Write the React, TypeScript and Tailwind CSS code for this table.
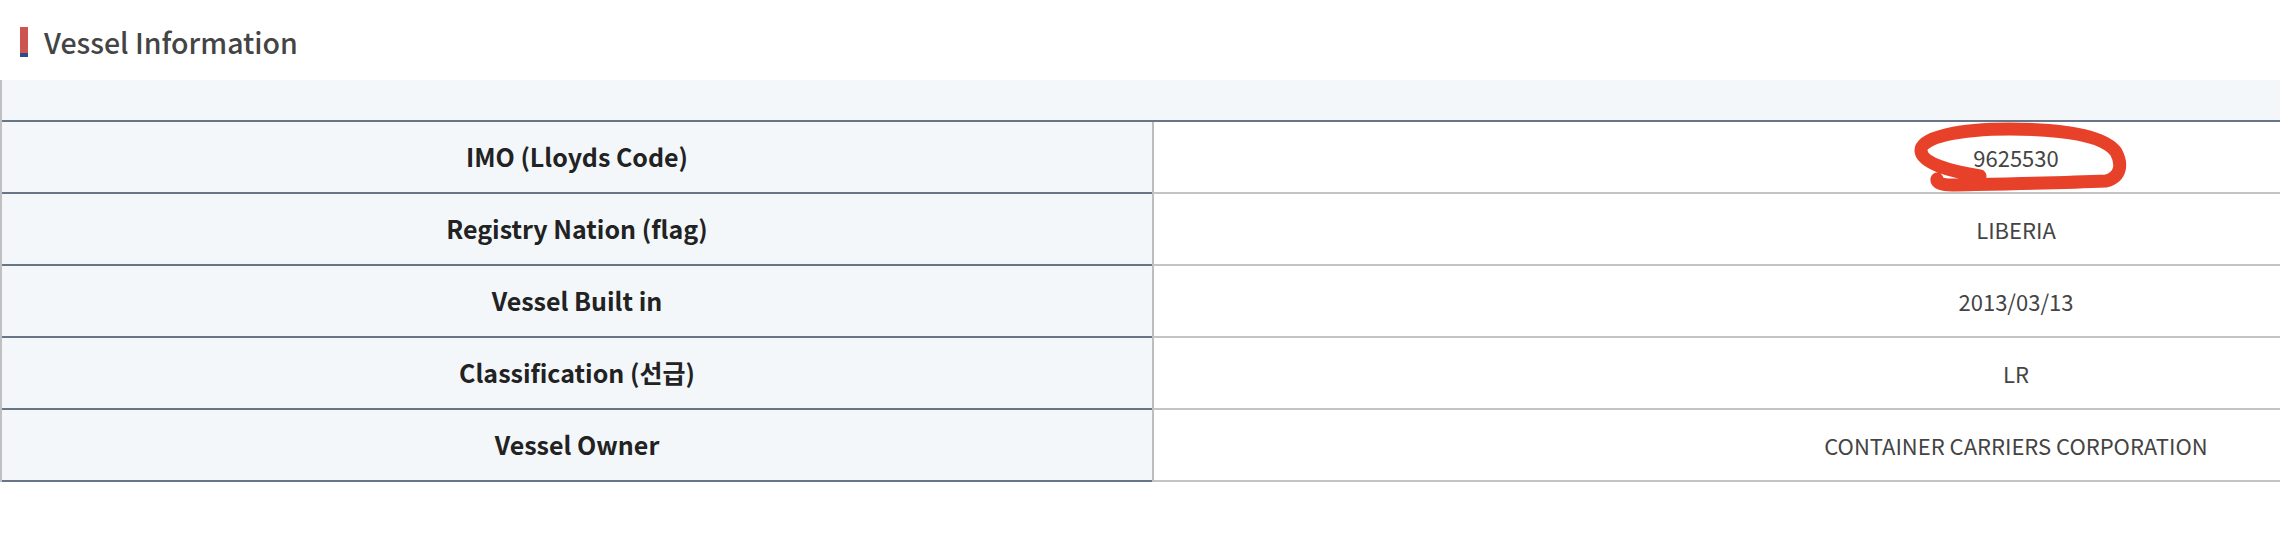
import React from 'react';

const rows = [
  { label: 'IMO (Lloyds Code)', value: '9625530', marked: true },
  { label: 'Registry Nation (flag)', value: 'LIBERIA' },
  { label: 'Vessel Built in', value: '2013/03/13' },
  { label: 'Classification (선급)', value: 'LR' },
  { label: 'Vessel Owner', value: 'CONTAINER CARRIERS CORPORATION' },
];

// hand drawn red loop round the IMO number
function Scribble() {
  return (
    <svg className="absolute left-[736px] top-[-7px] pointer-events-none" width="245" height="85" viewBox="0 0 245 85" fill="none">
      <path
        d="M 90 61 C 58 56, 32 48, 31 36 C 30 22, 70 14, 120 14 C 172 14, 214 20, 226 37 C 232 48, 232 62, 216 66 C 170 68, 110 69, 62 70 C 52 70, 46 68, 47 64"
        stroke="#e8412a"
        strokeWidth="13"
        strokeLinecap="round"
        strokeLinejoin="round"
      />
    </svg>
  );
}

export default function App() {
  return (
    <div className="w-[2280px] h-[540px] bg-white font-['Noto_Sans_CJK_KR','Noto_Sans',sans-serif] overflow-hidden">
      <div className="h-[80px] flex items-center pl-5 gap-4 pt-[4px]">
        <div className="w-2 h-[30px] flex flex-col">
          <div className="flex-1 bg-[#cc5550]" />
          <div className="h-1 bg-[#2e4a8a]" />
        </div>
        <h2 className="text-[28.5px] font-medium text-[#444] leading-none">Vessel Information</h2>
      </div>

      <div className="border-l-2 border-[#c0c0c0]">
        <div className="h-[42px] bg-[#f3f7fa] border-b-2 border-[#687487]" />
        {rows.map((r) => (
          <div key={r.label} className="grid grid-cols-[1150px_1fr] h-[72px]">
            <div className="bg-[#f3f7fa] border-b-2 border-[#687487] flex items-center justify-center text-[25px] font-semibold text-[#222]">
              {r.label}
            </div>
            <div className="relative border-l-2 border-b-2 border-l-[#bdbdbd] border-b-[#c4c4c4] flex items-center justify-center pl-[598px] text-[22px] text-[#444]">
              <span className="whitespace-nowrap">{r.value}</span>
              {r.marked && <Scribble />}
            </div>
          </div>
        ))}
      </div>
    </div>
  );
}
